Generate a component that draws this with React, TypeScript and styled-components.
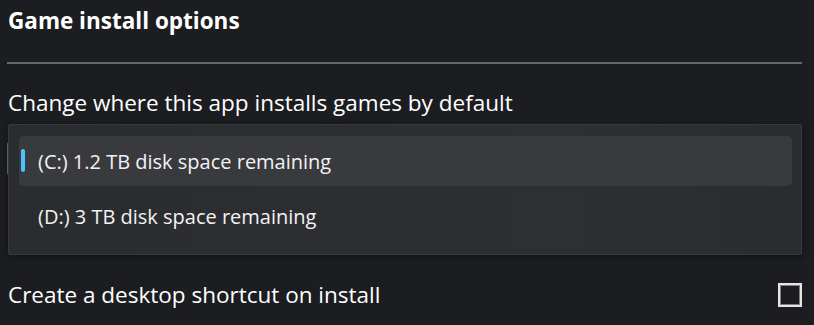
import * as React from "react";
import styled, { createGlobalStyle } from "styled-components";

const GlobalStyle = createGlobalStyle`
    html, body {
        margin: 0;
        padding: 0;
        background: #1c1d21;
    }
    body {
        font-family: "Open Sans", "Noto Sans", sans-serif;
        color: #ffffff;
    }
`;

const Page = styled.div`
    width: 814px;
    height: 325px;
    box-sizing: border-box;
    padding: 0 12px 0 8px;
    background: #1c1d21;
    overflow: hidden;
`;

const Title = styled.h2`
    margin: 0;
    padding-top: 7px;
    font-size: 22.5px;
    line-height: 28px;
    font-weight: 700;
`;

const Divider = styled.hr`
    margin: 27px 0 0 -1px;
    border: none;
    height: 2px;
    background: #666769;
`;

const Label = styled.div`
    margin-top: 24px;
    font-size: 22.5px;
    line-height: 30px;
`;

const SelectArea = styled.div`
    position: relative;
    margin-top: 23px;
    height: 35px;
`;

const ClosedSelect = styled.div`
    height: 35px;
    margin-left: -1px;
    border-radius: 4px;
    background: #2d2e32;
    border-left: 1px solid #6c7480;
    border-right: 1px solid #6c7480;
`;

const Popup = styled.div`
    position: absolute;
    left: 0;
    right: 0;
    top: -17px;
    box-sizing: border-box;
    height: 131px;
    display: flex;
    flex-direction: column;
    gap: 5px;
    padding: 11px 9px 0 10px;
    border: 1px solid #38393d;
    border-radius: 2px;
    background: linear-gradient(90deg, #2b2c30, #2d2f33 70%, #2b2c30);
    box-shadow: 0 2px 6px rgba(0, 0, 0, 0.4);
`;

const Option = styled.div<{ $selected?: boolean }>`
    position: relative;
    display: flex;
    align-items: center;
    height: 50px;
    flex-shrink: 0;
    padding-left: 19px;
    border-radius: 5px;
    background: ${p => (p.$selected ? "#393a3e" : "transparent")};
    font-size: 20px;
    color: #f2f2f2;
`;

const Indicator = styled.span`
    position: absolute;
    left: 2px;
    top: 13px;
    width: 4px;
    height: 23px;
    border-radius: 2px;
    background: #4cc2ff;
`;

const CheckRow = styled.label`
    display: flex;
    align-items: center;
    justify-content: space-between;
    margin-top: 104px;
    font-size: 22.5px;
    line-height: 30px;
`;

const Box = styled.span`
    width: 24px;
    height: 24px;
    box-sizing: border-box;
    border: 2px solid #e6e6e6;
    box-shadow: inset 0 0 0 1px #808080;
`;

export default function App() {
    const drives = [
        { id: "C", text: "(C:) 1.2 TB disk space remaining" },
        { id: "D", text: "(D:) 3 TB disk space remaining" },
    ];
    const selected = "C";
    return (
        <Page>
            <GlobalStyle />
            <Title>Game install options</Title>
            <Divider />
            <Label>Change where this app installs games by default</Label>
            <SelectArea>
                <ClosedSelect />
                <Popup>
                    {drives.map(d => (
                        <Option key={d.id} $selected={d.id === selected}>
                            {d.id === selected && <Indicator />}
                            {d.text}
                        </Option>
                    ))}
                </Popup>
            </SelectArea>
            <CheckRow>
                Create a desktop shortcut on install
                <Box />
            </CheckRow>
        </Page>
    );
}
